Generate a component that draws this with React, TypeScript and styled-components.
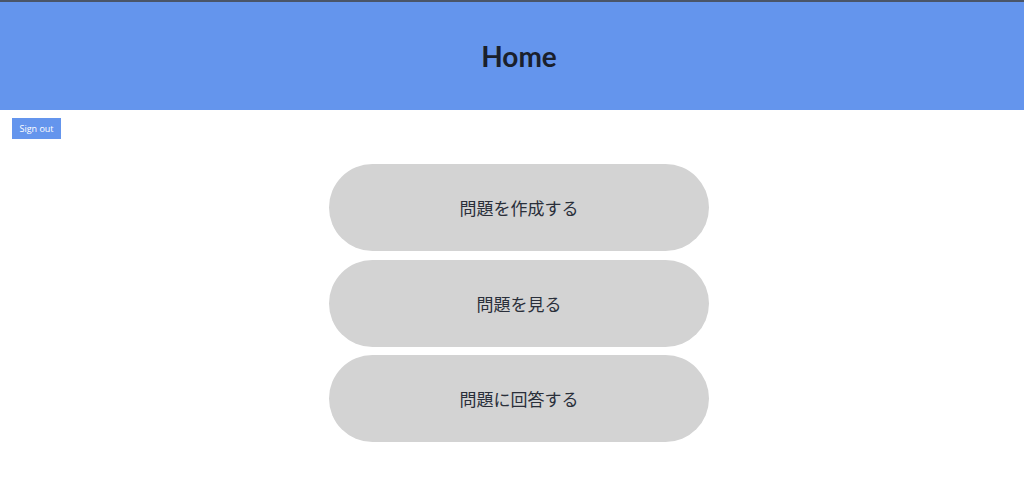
import React from "react";
import styled, { createGlobalStyle } from "styled-components";

const Global = createGlobalStyle`
  html, body { margin: 0; padding: 0; background: #fff; overflow-x: hidden; }
  body { font-family: "Open Sans", "Noto Sans CJK JP", sans-serif; }
`;

const Page = styled.div`
  width: 1038px;
`;

const Header = styled.header`
  height: 108px;
  background: #6495ed;
  border-top: 2px solid #4a5568;
  display: flex;
  align-items: center;
  justify-content: center;
`;

const Title = styled.h1`
  margin: 0;
  font-family: "Lato", "Noto Sans CJK JP", sans-serif;
  font-weight: 700;
  font-size: 28px;
  color: #1a202c;
`;

const Toolbar = styled.div`
  padding: 8px 12px 0;
  display: flex;
`;

const SignOut = styled.button`
  width: 49px;
  height: 21px;
  padding: 0;
  border: none;
  background: #6495ed;
  color: #fff;
  font-family: "Open Sans", sans-serif;
  font-size: 9px;
  cursor: pointer;
`;

const Menu = styled.nav`
  display: flex;
  flex-direction: column;
  align-items: center;
  gap: 8.5px;
  margin-top: 25px;
`;

const MenuButton = styled.button`
  width: 380px;
  height: 87px;
  border: none;
  border-radius: 44px;
  background: #d3d3d3;
  color: #2a2f3a;
  font-family: "Noto Sans CJK JP", sans-serif;
  font-size: 17px;
  cursor: pointer;
`;

const items = ["問題を作成する", "問題を見る", "問題に回答する"];

export default function App() {
  return (
    <Page>
      <Global />
      <Header>
        <Title>Home</Title>
      </Header>
      <Toolbar>
        <SignOut>Sign out</SignOut>
      </Toolbar>
      <Menu>
        {items.map((t) => (
          <MenuButton key={t}>{t}</MenuButton>
        ))}
      </Menu>
    </Page>
  );
}
